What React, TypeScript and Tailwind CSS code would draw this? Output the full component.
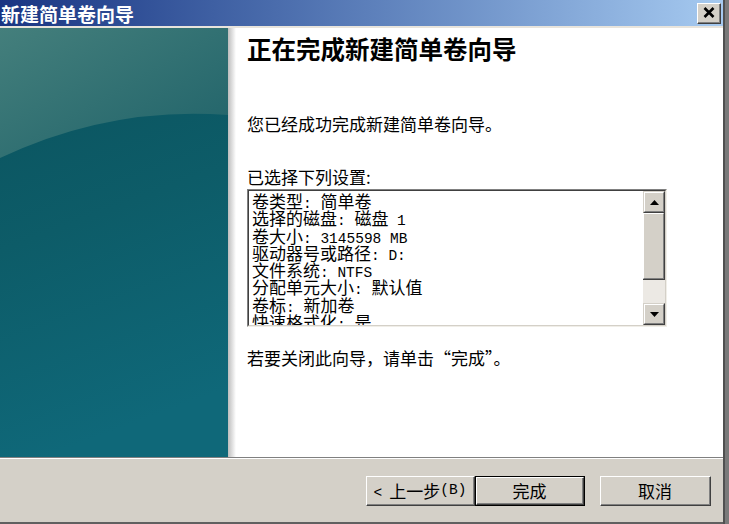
import type { ReactNode } from 'react';

const cjk = "font-['Noto_Sans_CJK_SC','Noto_Sans_CJK_JP',sans-serif]";

function M({ children }: { children: ReactNode }) {
  return <span className="font-['Liberation_Mono',monospace] text-[14.5px]">{children}</span>;
}

function ClassicButton({ children, isDefault }: { children: ReactNode; isDefault?: boolean }) {
  return (
    <div className={`h-[30px] ${isDefault ? 'border border-black' : ''}`}>
      <div className="h-full border-t border-l border-white border-r border-b border-r-[#404040] border-b-[#404040] bg-[#d4d0c8]">
        <div className="h-full flex items-center justify-center border-r border-b border-r-[#808080] border-b-[#808080] text-[17px] text-black">
          {children}
        </div>
      </div>
    </div>
  );
}

function ScrollArrow({ up }: { up?: boolean }) {
  return (
    <div className="h-[22px] bg-[#d4d0c8] border-t border-l border-t-[#d4d0c8] border-l-[#d4d0c8] border-r border-b border-r-[#404040] border-b-[#404040]">
      <div className="h-full flex items-center justify-center border-t border-l border-white border-r border-b border-r-[#808080] border-b-[#808080]">
        <svg width="9" height="5" viewBox="0 0 9 5">
          {up ? <polygon points="0,5 9,5 4.5,0" fill="#000" /> : <polygon points="0,0 9,0 4.5,5" fill="#000" />}
        </svg>
      </div>
    </div>
  );
}

function SidePanel() {
  return (
    <svg width="228" height="429" viewBox="0 0 228 429" className="block">
      <defs>
        <linearGradient id="base" x1="0" y1="0" x2="0.2" y2="1">
          <stop offset="0" stopColor="#0a525d" />
          <stop offset="0.5" stopColor="#0d5c68" />
          <stop offset="1" stopColor="#0f6879" />
        </linearGradient>
        <linearGradient id="top" x1="0" y1="0" x2="1" y2="1">
          <stop offset="0" stopColor="#447f7c" />
          <stop offset="1" stopColor="#1f6269" />
        </linearGradient>
      </defs>
      <rect width="228" height="429" fill="url(#base)" />
      <path d="M0,0 H228 V87 Q110,78 0,130 Z" fill="url(#top)" />
    </svg>
  );
}

const settings: ReactNode[] = [
  <>卷类型<M>: </M>简单卷</>,
  <>选择的磁盘<M>: </M>磁盘<M> 1</M></>,
  <>卷大小<M>: 3145598 MB</M></>,
  <>驱动器号或路径<M>: D:</M></>,
  <>文件系统<M>: NTFS</M></>,
  <>分配单元大小<M>: </M>默认值</>,
  <>卷标<M>: </M>新加卷</>,
  <>快速格式化<M>: </M>是</>,
];

export default function App() {
  return (
    <div className={`w-[729px] h-[524px] flex bg-[#d4d0c8] overflow-hidden ${cjk}`}>
      <div className="w-[723px] flex flex-col">
        <div className="h-[26px] flex items-center justify-between bg-gradient-to-r from-[#1a3482] to-[#a6caf0]">
          <span className="text-[19px] font-bold text-white leading-none pl-[1px]">新建简单卷向导</span>
          <div className="mr-[2px] w-[24px] h-[21px] bg-[#d4d0c8] border-t border-l border-white border-r border-b border-r-[#404040] border-b-[#404040]">
            <div className="h-full flex items-center justify-center border-r border-b border-r-[#808080] border-b-[#808080]">
              <svg width="12" height="11" viewBox="0 0 12 11">
                <path d="M1.5,1 L10.5,10 M10.5,1 L1.5,10" stroke="#000" strokeWidth="2.6" />
              </svg>
            </div>
          </div>
        </div>
        <div className="h-[2px] bg-[#e8e4dc]" />

        <div className="h-[429px] flex">
          <SidePanel />
          <div className="w-[8px] bg-gradient-to-r from-[#bdbdbd] to-white" />
          <div className="flex-1 bg-white pl-[11px] pt-[4px] text-black">
            <h1 className="text-[24.5px] font-bold leading-[34px]">正在完成新建简单卷向导</h1>
            <p className="mt-[47px] text-[17px] leading-[22px]">您已经成功完成新建简单卷向导。</p>
            <p className="mt-[31px] text-[17px] leading-[22px]">已选择下列设置:</p>
            <div className="mt-[1px] w-[420px] h-[138px] flex border-t border-l border-[#808080] border-r border-b border-r-[#f0eee8] border-b-[#f0eee8]">
              <div className="flex-1 flex border-t border-l border-t-[#404040] border-l-[#404040] border-r border-b border-r-[#d4d0c8] border-b-[#d4d0c8]">
                <div className="flex-1 overflow-hidden pl-[3px] pt-[1px] text-[17px] whitespace-nowrap">
                  {settings.map((line, i) => (
                    <div key={i} className="h-[17.3px] leading-[17px]">
                      {line}
                    </div>
                  ))}
                </div>
                <div className="w-[22px] flex flex-col">
                  <ScrollArrow up />
                  <div className="h-[67px] bg-[#d4d0c8] border-r border-b border-r-[#404040] border-b-[#404040]">
                    <div className="h-full border-t border-l border-white border-r border-b border-r-[#808080] border-b-[#808080]" />
                  </div>
                  <div className="flex-1 bg-[#ece9e4]" />
                  <ScrollArrow />
                </div>
              </div>
            </div>
            <p className="mt-[20px] text-[17px] leading-[22px]">若要关闭此向导，请单击“完成”。</p>
          </div>
        </div>

        <div className="h-px bg-[#808080]" />
        <div className="h-px bg-white" />
        <div className="flex-1 flex items-start pt-[17px] pl-[366px]">
          <div className="w-[109px]">
            <ClassicButton>
              <span className="pr-[7px]">
                <M>&lt;</M>
              </span>
              上一步<M>(B)</M>
            </ClassicButton>
          </div>
          <div className="w-[110px]">
            <ClassicButton isDefault>完成</ClassicButton>
          </div>
          <div className="w-[111px] ml-[15px]">
            <ClassicButton>取消</ClassicButton>
          </div>
        </div>
        <div className="h-[2px] bg-[#606060]" />
      </div>
      <div className="flex-1 flex">
        <div className="w-[2px] bg-[#505050]" />
        <div className="flex-1 bg-[#7a7a7a]" />
      </div>
    </div>
  );
}
